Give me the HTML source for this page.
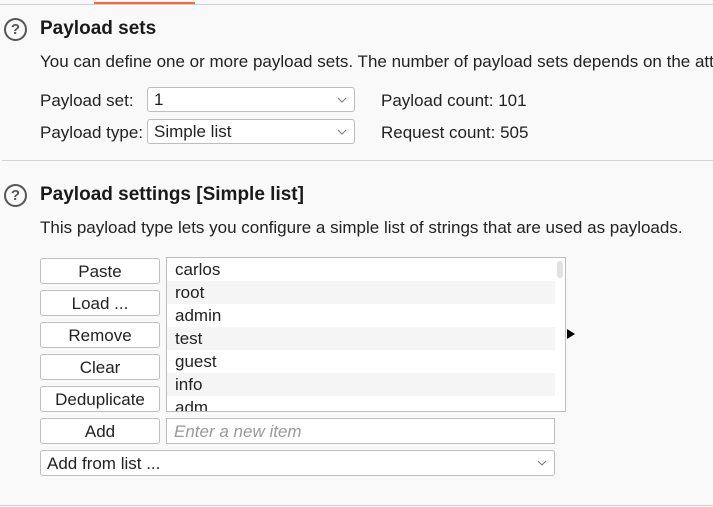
<!DOCTYPE html>
<html><head><meta charset="utf-8"><style>
html,body{margin:0;padding:0;}
body{width:713px;height:507px;overflow:hidden;background:#f9f9f9;position:relative;font-family:"Liberation Sans",sans-serif;font-size:17px;color:#222;}
.a{position:absolute;white-space:nowrap;}
.h{font-weight:bold;font-size:19px;color:#1a1a1a;}
.q{position:absolute;width:23px;height:23px;border:2px solid #555;border-radius:50%;box-sizing:border-box;font-size:15px;font-weight:bold;color:#555;text-align:center;line-height:19px;}
.sel{position:absolute;background:#fff;border:1px solid #bdbdbd;border-radius:3px;box-sizing:border-box;height:25px;line-height:23px;padding-left:6px;}
.sel svg{position:absolute;right:7px;top:9px;}
.btn{position:absolute;left:40px;width:120px;height:26px;background:#fff;border:1px solid #bdbdbd;border-radius:3px;box-sizing:border-box;text-align:center;line-height:25px;}
.li{position:absolute;left:167px;width:388px;height:23px;line-height:24px;padding-left:8px;box-sizing:border-box;}
.li.alt{background:#f5f5f5;}
</style></head><body>
<div class="a" style="left:0;top:4px;width:713px;height:1px;background:#cfcfcf"></div>
<div class="a" style="left:94px;top:2px;width:101px;height:2px;background:#ff6633"></div>

<div class="q" style="left:4px;top:18px">?</div>
<div class="a h" style="left:40px;top:18px">Payload sets</div>
<div class="a" style="left:40px;top:52px;width:673px;overflow:hidden">You can define one or more payload sets. The number of payload sets depends on the attack type</div>
<div class="a" style="left:40px;top:91px">Payload set:</div>
<div class="sel" style="left:147px;top:87px;width:208px">1<svg width="10" height="6"><path d="M1 1L5 5L9 1" stroke="#777" fill="none"/></svg></div>
<div class="a" style="left:381px;top:91px">Payload count: 101</div>
<div class="a" style="left:40px;top:123px">Payload type:</div>
<div class="sel" style="left:147px;top:119px;width:208px">Simple list<svg width="10" height="6"><path d="M1 1L5 5L9 1" stroke="#777" fill="none"/></svg></div>
<div class="a" style="left:381px;top:123px">Request count: 505</div>

<div class="a" style="left:2px;top:160px;width:711px;height:1px;background:#d4d4d4"></div>

<div class="q" style="left:4px;top:184px">?</div>
<div class="a h" style="left:40px;top:184px">Payload settings [Simple list]</div>
<div class="a" style="left:40px;top:218px">This payload type lets you configure a simple list of strings that are used as payloads.</div>

<div class="btn" style="top:258px">Paste</div>
<div class="btn" style="top:290px">Load ...</div>
<div class="btn" style="top:322px">Remove</div>
<div class="btn" style="top:354px">Clear</div>
<div class="btn" style="top:386px">Deduplicate</div>
<div class="btn" style="top:418px">Add</div>

<div class="a" style="left:166px;top:257px;width:400px;height:155px;background:#fff;border:1px solid #bdbdbd;box-sizing:border-box;overflow:hidden">
</div>
<div class="a" style="left:167px;top:258px;width:398px;height:153px;overflow:hidden">
<div class="li" style="left:0;top:0">carlos</div>
<div class="li alt" style="left:0;top:23px">root</div>
<div class="li" style="left:0;top:46px">admin</div>
<div class="li alt" style="left:0;top:69px">test</div>
<div class="li" style="left:0;top:92px">guest</div>
<div class="li alt" style="left:0;top:115px">info</div>
<div class="li" style="left:0;top:138px">adm</div>
<div class="a" style="left:390px;top:3px;width:6px;height:17px;background:#e2e2e2;border-radius:3px"></div>
</div>
<svg class="a" style="left:567px;top:329px" width="8" height="10"><path d="M0 0L8 5L0 10Z" fill="#000"/></svg>

<div class="a" style="left:166px;top:418px;width:389px;height:26px;background:#fff;border:1px solid #bdbdbd;box-sizing:border-box;padding-left:7px;line-height:25px;font-style:italic;color:#999">Enter a new item</div>
<div class="sel" style="left:40px;top:450px;width:515px;height:26px;line-height:25px">Add from list ...<svg width="10" height="6"><path d="M1 1L5 5L9 1" stroke="#777" fill="none"/></svg></div>

<div class="a" style="left:0;top:505px;width:713px;height:1px;background:#cfcfcf"></div>
</body></html>
